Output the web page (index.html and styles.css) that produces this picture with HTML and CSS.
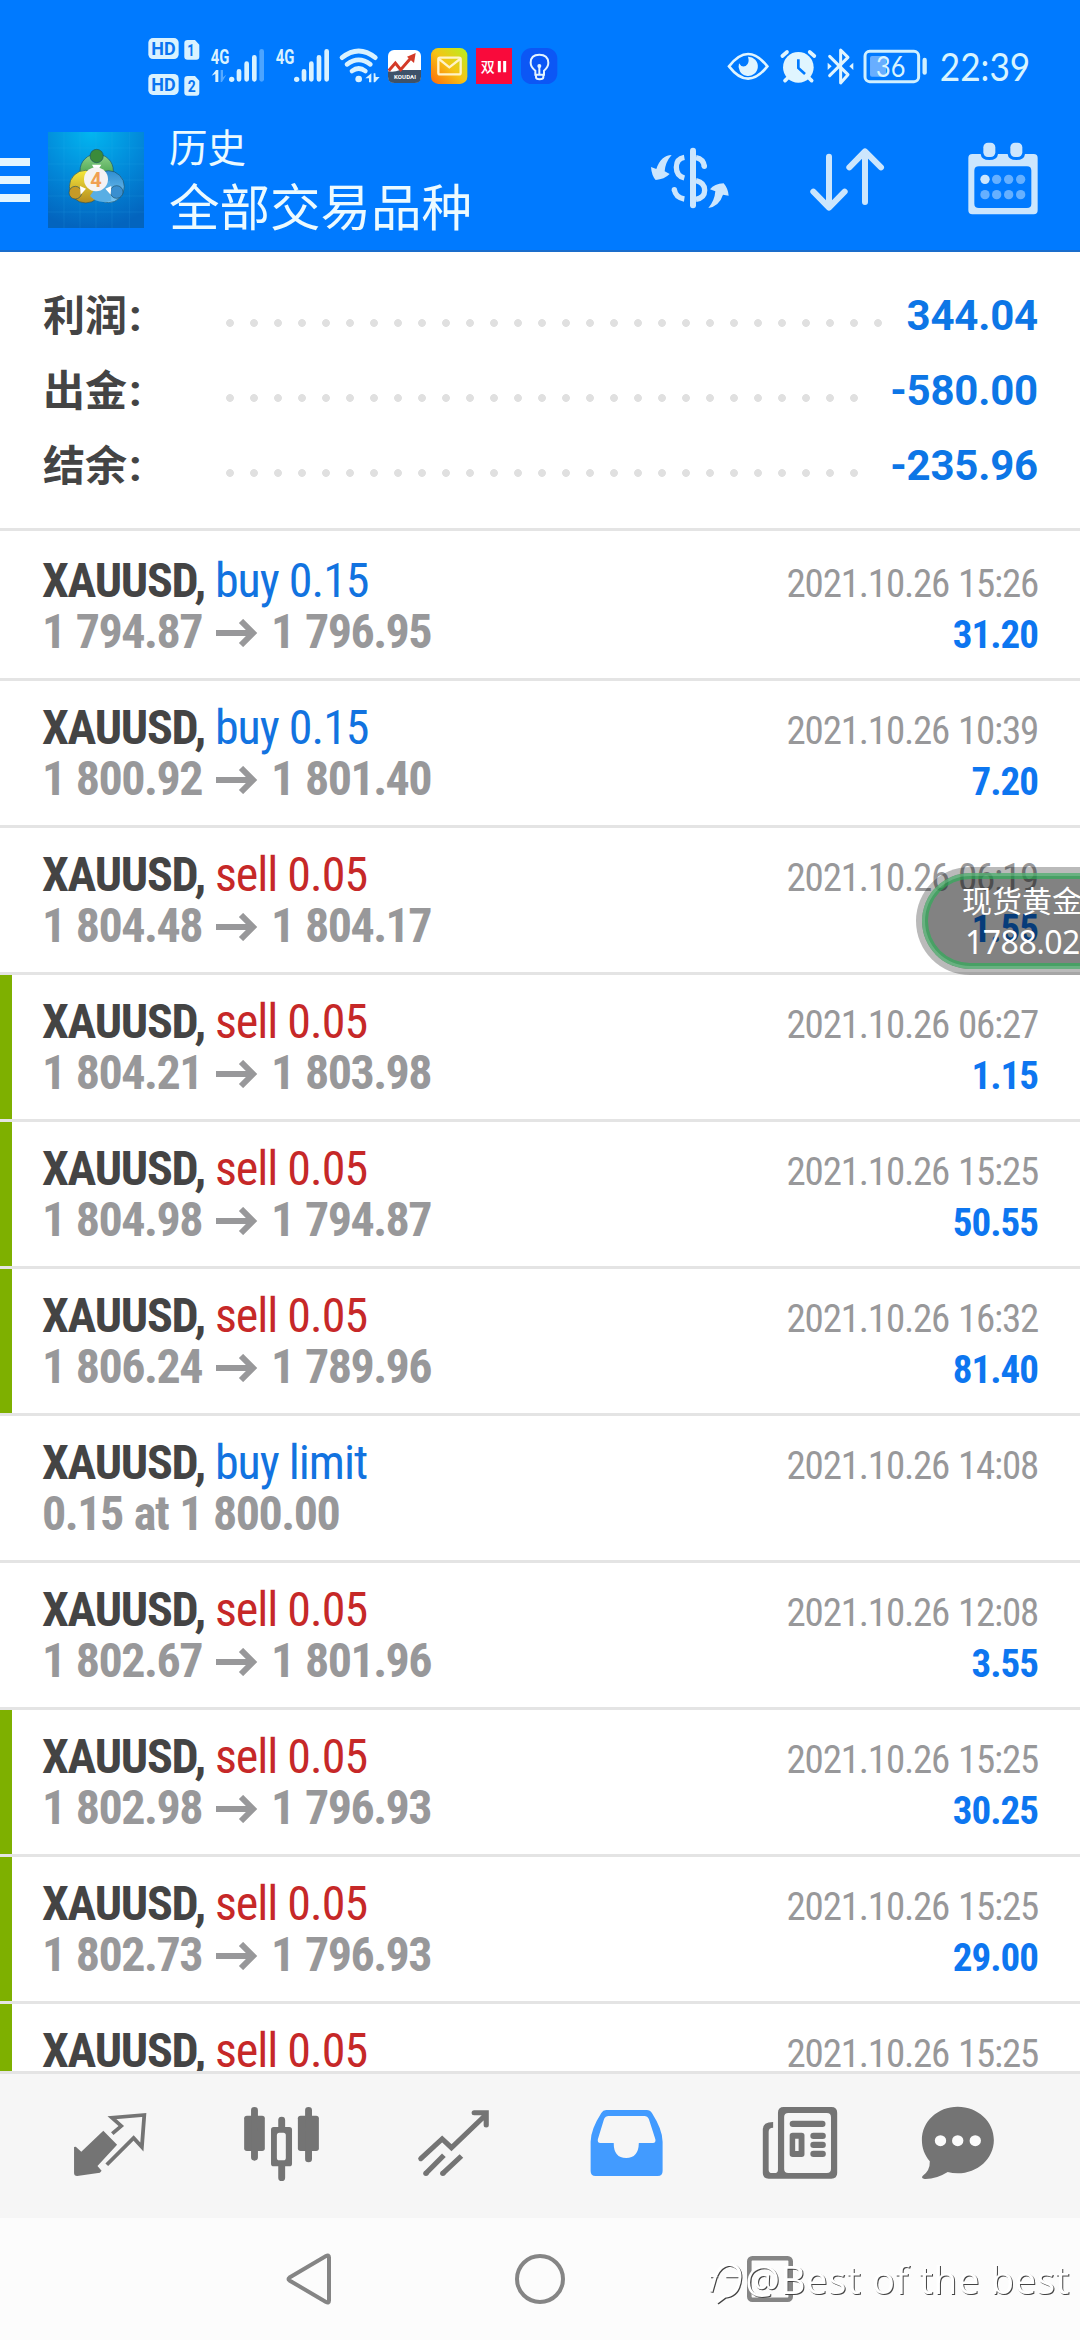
FILE: index.html
```html
<!DOCTYPE html>
<html lang="zh-CN">
<head>
<meta charset="utf-8">
<title>历史</title>
<link rel="stylesheet" href="styles.css">
</head>
<body>
<header class="top">
  <div class="status">
    <div class="status-group">
      <svg viewBox="50 45 172 192" width="57.3" height="64"><g fill="#d9f2ff"><rect x="54" y="54" width="91" height="63" rx="14"/><rect x="54" y="162" width="91" height="63" rx="14"/><path d="M172 60h22l13 14v36q0 9-9 9h-26q-10 0-10-9V70q0-10 10-10zM172 168h22l13 14v36q0 9-9 9h-26q-10 0-10-9v-40q0-10 10-10z"/></g><g class="st-bold" fill="#0a74f0"><text x="63" y="105" font-size="54" textLength="73" lengthAdjust="spacingAndGlyphs">HD</text><text x="63" y="213" font-size="54" textLength="73" lengthAdjust="spacingAndGlyphs">HD</text><text x="171" y="108" font-size="48" textLength="22" lengthAdjust="spacingAndGlyphs">1</text><text x="172" y="216" font-size="48" textLength="24" lengthAdjust="spacingAndGlyphs">2</text></g></svg>
      <svg viewBox="222 45 198 192" width="66" height="64"><g fill="#d9f2ff"><text class="st-bold" x="242" y="132" font-size="60" textLength="56" lengthAdjust="spacingAndGlyphs">4G</text><path d="M245 167l13-17h7v36h-9v-24z"/><circle cx="305" cy="178" r="8"/></g><g stroke="#d9f2ff" stroke-width="14" stroke-linecap="round"><path d="M327 178v-24M350 178v-47M373 178v-66"/><path opacity=".35" d="M395 178V94"/></g><path opacity=".4" fill="#d9f2ff" d="M272 150h7v22l10-8-13 22h-4z"/></svg>
      <svg viewBox="420 45 192 192" width="64" height="64"><g fill="#d9f2ff"><text class="st-bold" x="437" y="132" font-size="60" textLength="56" lengthAdjust="spacingAndGlyphs">4G</text><circle cx="500" cy="178" r="8"/></g><path stroke="#d9f2ff" stroke-width="14" stroke-linecap="round" d="M522 178v-24M544 178v-47M567 178v-66M590 178V94"/></svg>
      <svg viewBox="612 45 150 192" width="50" height="64"><g fill="none" stroke="#d9f2ff" stroke-width="14" stroke-linecap="round"><path d="M636 113Q686 73 736 113M651 133q35-27 70 0M666 153q20-15 40 0"/></g><circle cx="686" cy="177" r="10" fill="#d9f2ff"/><path fill="#d9f2ff" d="M724 160v27h-7v-12h-11zM731 160h5l1 11h12l-14 16h-4z"/></svg>
      <svg viewBox="762 45 126 192" width="42" height="64"><rect x="774" y="90" width="99" height="99" rx="18" fill="#fff"/><path fill="#3e5269" d="M774 154q18 4 36-4h63v20q0 19-19 19h-60q-20 0-20-19z"/><path fill="none" stroke="#d33a28" stroke-width="9" d="M776 152l20-23 16 20 30-34"/><path fill="#d33a28" d="M857 99l-5 30-21-19z"/><text x="792" y="176" font-size="18" class="st-bold" fill="#fff" textLength="66">KOUDAI</text></svg>
      <svg viewBox="888 45 138 192" width="46" height="64"><defs><linearGradient id="mail" x1="0" y1="1" x2="1" y2="0"><stop offset="0" stop-color="#ff6a0a"/><stop offset=".5" stop-color="#f5c415"/><stop offset="1" stop-color="#b6f021"/></linearGradient></defs><rect x="903" y="84" width="109" height="108" rx="22" fill="url(#mail)"/><rect x="925" y="113" width="67" height="50" rx="5" fill="none" stroke="#fff3c8" stroke-width="7"/><path d="M927 117l31 25 32-25" fill="none" stroke="#fff3c8" stroke-width="7"/></svg>
      <svg viewBox="1026 45 132 192" width="44" height="64"><rect x="1038" y="84" width="108" height="108" fill="#f90a3b"/><text class="st-cjk" x="1052" y="155" font-size="42" fill="#fff">双</text><path stroke="#fff" stroke-width="9" d="M1108 123v34M1124 123v34"/></svg>
      <svg viewBox="1158 45 132 192" width="44" height="64"><rect x="1173" y="84" width="109" height="108" rx="32" fill="#0c57f5"/><g fill="none" stroke="#e4f4ff" stroke-width="6"><path d="M1216 164v-12q-14-11-14-24 0-24 26-24t27 24q0 13-13 24v12zM1218 164v8q0 6 11 6t11-6v-8M1228 140v22"/></g><circle cx="1228" cy="138" r="6" fill="#e4f4ff"/></svg>
    </div>
    <div class="status-group">
      <svg viewBox="70 45 152 130" width="50.7" height="43.3"><path d="M85 109Q142 35 200 109 142 183 85 109z" fill="none" stroke="#e0f5ff" stroke-width="8"/><path d="M142 80a29 29 0 1 1-27 20q7 13 20 8 13-8 7-28z" fill="#e0f5ff"/></svg>
      <svg viewBox="222 45 140 130" width="46.7" height="43.3"><circle cx="292" cy="112" r="46" fill="#e0f5ff"/><path d="M292 88v26l20 18" fill="none" stroke="#007aff" stroke-width="8"/><path d="M244 78l14-12M340 78l-14-12M252 152l8-8M332 152l-8-8" stroke="#e0f5ff" stroke-width="11" stroke-linecap="round"/></svg>
      <svg viewBox="362 45 112 130" width="37.3" height="43.3"><path d="M385 79l55 55-22 25V60l22 22-55 55" fill="none" stroke="#e0f5ff" stroke-width="9" stroke-linejoin="round" stroke-linecap="round"/><path d="M379 98l12 11-12 11zM456 98l-12 11 12 11z" fill="#e0f5ff"/></svg>
      <svg viewBox="474 45 216 130" width="72" height="43.3"><rect x="492" y="64" width="161" height="91" rx="14" fill="none" stroke="#d0f0ff" stroke-width="9"/><rect x="507" y="78" width="48" height="62" rx="6" fill="#68aeff"/><path d="M671 90v38" stroke="#d0f0ff" stroke-width="13" stroke-linecap="round"/><text class="st-light" x="525" y="140" font-size="84" fill="#d8f4ff" textLength="88" lengthAdjust="spacingAndGlyphs">36</text></svg>
      <svg class="clock" viewBox="690 45 300 130" width="100" height="43.3"><text class="st-light" x="716" y="154" font-size="115" fill="#d8f4ff" textLength="272" lengthAdjust="spacingAndGlyphs">22:39</text></svg>
    </div>
  </div>
  <div class="appbar">
    <div class="menu"><i></i><i></i><i></i></div>
    <svg class="logo" viewBox="144 66 288 288" width="96" height="96">
      <defs>
        <radialGradient id="sky" cx=".45" cy="0" r="1"><stop offset="0" stop-color="#02b6f0"/><stop offset=".55" stop-color="#0287d8"/><stop offset="1" stop-color="#0364be"/></radialGradient>
        <linearGradient id="gr" x2="0" y2="1"><stop offset="0" stop-color="#8fd28b"/><stop offset="1" stop-color="#238a2c"/></linearGradient>
        <linearGradient id="ye" x2="0" y2="1"><stop offset="0" stop-color="#f5e83c"/><stop offset="1" stop-color="#b58b1e"/></linearGradient>
        <linearGradient id="bl" x2="0" y2="1"><stop offset="0" stop-color="#2f8ed2"/><stop offset="1" stop-color="#7cc6f2"/></linearGradient>
      </defs>
      <path fill="url(#sky)" d="M144 66h288v288H144z"/>
      <path stroke="#3bb4ee" stroke-opacity=".22" stroke-width="2" d="M192 66v288M240 66v288M288 66v288M336 66v288M388 66v288M144 114h288M144 162h288M144 210h288M144 258h288M144 306h288"/>
      <g stroke="#1b4d63" stroke-opacity=".6" stroke-width="3">
        <circle cx="290" cy="182" r="50" fill="url(#gr)"/>
        <circle cx="325" cy="230" r="48" fill="url(#bl)"/>
        <circle cx="257" cy="230" r="49" fill="url(#ye)"/>
        <path d="M288 232l42-20 4 60q-40 12-64-14z" fill="#58aee4" stroke="none"/>
        <circle cx="290" cy="138" r="20" fill="#3b8b3a"/>
        <circle cx="226" cy="248" r="19" fill="#c69a26"/>
        <circle cx="350" cy="246" r="19" fill="#3a8fd0"/>
      </g>
      <path fill="#fff" d="M276 164h28l-10 16h-9zM240 228l18 8-16 18zM334 228l-18 8 16 18z"/>
      <circle cx="288" cy="208" r="36" fill="#f5f3f4"/>
      <text class="st-bold" x="271" y="230" font-size="60" fill="#f0a052">4</text>
    </svg>
    <div class="titles"><div class="title-small">历史</div><div class="title-big">全部交易品种</div></div>
    <div class="actions">
      <svg viewBox="84 54 252 252" width="84" height="84"><path d="M219 92v164" stroke="#cce6fd" stroke-width="18" stroke-linecap="round"/><g fill="none" stroke="#cce6fd" stroke-width="16"><path d="M193 112q-24 4-24 30t24 32M163 209q4 24 30 28"/><path d="M228 113q22 4 25 26M228 182q26 6 26 29t-26 27"/></g><circle cx="253" cy="139" r="8" fill="#cce6fd"/><circle cx="163" cy="209" r="8" fill="#cce6fd"/><path fill="#cce6fd" d="M155 105q-33 2-46 42l-16-6q2 26 14 39 26-2 42-18l-15-8q2-28 21-49zM265 264q33-6 44-40l17 3q-2-22-15-37-28 1-41 18l16 6q-2 28-21 50z"/></svg>
      <svg viewBox="552 54 252 252" width="84" height="84"><path d="M624 110v150M577 215l47 48 47-48M732 246V96M685 142l47-48 48 48" fill="none" stroke="#cce6fd" stroke-width="18" stroke-linecap="round" stroke-linejoin="round"/></svg>
      <svg viewBox="1022 54 252 252" width="84" height="84"><path fill="#cce6fd" fill-rule="evenodd" d="M1056 102h25q2 18 26 18t26-18h29q2 18 26 18t26-18h26q12 0 12 12v156q0 13-12 13h-184q-12 0-12-13V114q0-12 12-12zm20 37q-14 0-14 13v99q0 13 14 13h144q13 0 13-13v-99q0-13-13-13z"/><rect x="1089" y="68" width="36" height="43" rx="14" fill="#cce6fd"/><rect x="1170" y="68" width="36" height="43" rx="14" fill="#cce6fd"/><g fill="#66b0ff"><circle cx="1094" cy="178" r="14" fill="#cce6fd"/><circle cx="1129" cy="178" r="14"/><circle cx="1165" cy="178" r="14"/><circle cx="1201" cy="178" r="14"/><circle cx="1094" cy="224" r="14"/><circle cx="1129" cy="224" r="14"/><circle cx="1165" cy="224" r="14"/><circle cx="1201" cy="224" r="14"/></g></svg>
    </div>
  </div>
</header>

<section class="summary">
  <div class="sum-row"><span class="sum-label">利润<span class="colon">:</span></span><span class="dots dots-long"></span><span class="sum-value">344.04</span></div>
  <div class="sum-row"><span class="sum-label">出金<span class="colon">:</span></span><span class="dots"></span><span class="sum-value">-580.00</span></div>
  <div class="sum-row"><span class="sum-label">结余<span class="colon">:</span></span><span class="dots"></span><span class="sum-value">-235.96</span></div>
</section>

<main class="list">
  <article class="deal"><div class="line"><span><b class="sym">XAUUSD, </b><span class="buy">buy 0.15</span></span><time>2021.10.26 15:26</time></div><div class="line"><span class="price">1 794.87<svg class="arrow" viewBox="0 0 42 28"><path d="M0 14h37M25 2l12 12-12 12"/></svg>1 796.95</span><span class="profit">31.20</span></div></article>
  <article class="deal"><div class="line"><span><b class="sym">XAUUSD, </b><span class="buy">buy 0.15</span></span><time>2021.10.26 10:39</time></div><div class="line"><span class="price">1 800.92<svg class="arrow" viewBox="0 0 42 28"><path d="M0 14h37M25 2l12 12-12 12"/></svg>1 801.40</span><span class="profit">7.20</span></div></article>
  <article class="deal"><div class="line"><span><b class="sym">XAUUSD, </b><span class="sell">sell 0.05</span></span><time>2021.10.26 06:19</time></div><div class="line"><span class="price">1 804.48<svg class="arrow" viewBox="0 0 42 28"><path d="M0 14h37M25 2l12 12-12 12"/></svg>1 804.17</span><span class="profit">1.55</span></div></article>
  <article class="deal tp"><div class="line"><span><b class="sym">XAUUSD, </b><span class="sell">sell 0.05</span></span><time>2021.10.26 06:27</time></div><div class="line"><span class="price">1 804.21<svg class="arrow" viewBox="0 0 42 28"><path d="M0 14h37M25 2l12 12-12 12"/></svg>1 803.98</span><span class="profit">1.15</span></div></article>
  <article class="deal tp"><div class="line"><span><b class="sym">XAUUSD, </b><span class="sell">sell 0.05</span></span><time>2021.10.26 15:25</time></div><div class="line"><span class="price">1 804.98<svg class="arrow" viewBox="0 0 42 28"><path d="M0 14h37M25 2l12 12-12 12"/></svg>1 794.87</span><span class="profit">50.55</span></div></article>
  <article class="deal tp"><div class="line"><span><b class="sym">XAUUSD, </b><span class="sell">sell 0.05</span></span><time>2021.10.26 16:32</time></div><div class="line"><span class="price">1 806.24<svg class="arrow" viewBox="0 0 42 28"><path d="M0 14h37M25 2l12 12-12 12"/></svg>1 789.96</span><span class="profit">81.40</span></div></article>
  <article class="deal"><div class="line"><span><b class="sym">XAUUSD, </b><span class="buy">buy limit</span></span><time>2021.10.26 14:08</time></div><div class="line"><span class="price">0.15 at 1 800.00</span></div></article>
  <article class="deal"><div class="line"><span><b class="sym">XAUUSD, </b><span class="sell">sell 0.05</span></span><time>2021.10.26 12:08</time></div><div class="line"><span class="price">1 802.67<svg class="arrow" viewBox="0 0 42 28"><path d="M0 14h37M25 2l12 12-12 12"/></svg>1 801.96</span><span class="profit">3.55</span></div></article>
  <article class="deal tp"><div class="line"><span><b class="sym">XAUUSD, </b><span class="sell">sell 0.05</span></span><time>2021.10.26 15:25</time></div><div class="line"><span class="price">1 802.98<svg class="arrow" viewBox="0 0 42 28"><path d="M0 14h37M25 2l12 12-12 12"/></svg>1 796.93</span><span class="profit">30.25</span></div></article>
  <article class="deal tp"><div class="line"><span><b class="sym">XAUUSD, </b><span class="sell">sell 0.05</span></span><time>2021.10.26 15:25</time></div><div class="line"><span class="price">1 802.73<svg class="arrow" viewBox="0 0 42 28"><path d="M0 14h37M25 2l12 12-12 12"/></svg>1 796.93</span><span class="profit">29.00</span></div></article>
  <article class="deal tp"><div class="line"><span><b class="sym">XAUUSD, </b><span class="sell">sell 0.05</span></span><time>2021.10.26 15:25</time></div></article>
</main>

<nav class="tabs">
  <svg viewBox="180 144 278.8 288" preserveAspectRatio="none"><path fill="#747474" d="M300 242L340 284 283 348l12 14-5 6-66 10q-9 0-9-9v-78l5-1 16 15z"/><path fill="none" stroke="#747474" stroke-width="11" d="M326 251l26-23-27-25 94-8-7 96-24-27-78 80"/></svg>
  <svg viewBox="679.5 144 278.8 288" preserveAspectRatio="none"><g fill="#747474"><rect x="709" y="197" width="60" height="106" rx="8"/><rect x="865" y="197" width="61" height="106" rx="8"/><path fill-rule="evenodd" d="M795 231h45q8 0 8 8v102q0 8-8 8h-45q-8 0-8-8V239q0-8 8-8zm16 17q-7 0-7 8v67q0 8 7 8h12q7 0 7-8v-67q0-8-7-8z"/></g><path stroke="#747474" stroke-width="20" stroke-linecap="round" d="M739 181v141M896 181v146M818 210v25M818 345v38"/></svg>
  <svg viewBox="1179 144 278.8 288" preserveAspectRatio="none"><g fill="none" stroke="#747474" stroke-width="15"><path stroke-linecap="round" d="M1222 326l62-59 27 26 97-96M1377 188h35v37"/><path d="M1237 370l52-54M1286 370l54-52"/></g><circle cx="1237" cy="370" r="8" fill="#747474"/><circle cx="1286" cy="370" r="8" fill="#747474"/></svg>
  <svg viewBox="110.3 144 278.8 288" preserveAspectRatio="none"><path fill="#429bff" fill-rule="evenodd" d="M192 180h118q10 0 15 9 31 50 31 86v88q0 15-14 15H161q-14 0-14-15v-88q0-36 31-86 5-9 14-9zm7 18q-9 0-13 9l-18 61q-2 11 7 11h39q0 45 36 45t37-45h41q9 0 7-11l-19-61q-4-9-13-9z"/></svg>
  <svg viewBox="609.8 144 278.8 288" preserveAspectRatio="none"><path fill="#747474" fill-rule="evenodd" d="M708 171h138q17 0 17 17v181q0 17-17 17H664q-17 0-17-17V238q0-22 30-22v17q-13 0-13 12v114q0 10 10 10h7q10 0 10-10V188q0-17 17-17zm13 18q-12 0-12 12v156q0 12 12 12h112q12 0 12-12V201q0-12-12-12z"/><g fill="#747474"><rect x="725" y="212" width="104" height="19" rx="9"/><path fill-rule="evenodd" d="M734 248h26q8 0 8 8v57q0 8-8 8h-26q-9 0-9-8v-57q0-8 9-8zm7 18v37h10v-37z"/><rect x="785" y="248" width="45" height="19" rx="9"/><rect x="785" y="275" width="45" height="19" rx="9"/><rect x="785" y="302" width="45" height="19" rx="9"/></g></svg>
  <svg viewBox="1109.3 144 278.8 288" preserveAspectRatio="none"><path fill="#747474" d="M1213 170c58 0 105 44 105 100s-47 100-105 100q-16 0-29-4-34 22-67 21-11-2-6-9 22-16 21-44c-15-19-23-39-23-64 0-56 46-100 104-100z"/><g fill="#fbfbfb"><circle cx="1163" cy="272" r="16.500"/><circle cx="1213" cy="272" r="16.500"/><circle cx="1264" cy="272" r="16.500"/></g></svg>
</nav>

<footer class="sysnav">
  <svg width="50" height="54" viewBox="0 0 50 54"><path d="M4.500 25.500 41 4q3-1.500 3 1.500v43q0 3-3 1.500L4.500 28.500q-2-1.500 0-3z" fill="none" stroke="#858585" stroke-width="4"/></svg>
  <svg width="50" height="50" viewBox="0 0 50 50"><circle cx="25" cy="25" r="23" fill="none" stroke="#858585" stroke-width="4"/></svg>
  <svg width="46" height="46" viewBox="0 0 46 46"><rect x="2.300" y="2.300" width="41.400" height="41.400" rx="3" fill="none" stroke="#858585" stroke-width="4.600"/></svg>
  <svg class="watermark" viewBox="0 80 1140 210" width="380" height="70"><g fill="none" stroke="#fff" stroke-width="9"><path d="M30 169h22M33 217l13-46q14-32 40-36 34 2 34 38-4 54-46 58l-24 18M76 169h42"/></g><text x="136" y="223" font-size="116" textLength="972" lengthAdjust="spacing">@Best of the best</text></svg>
</footer>

<aside class="quote-dock"><div class="quote"><span class="quote-name">现货黄金</span><span class="quote-price">1788.02</span></div></aside>
</body>
</html>
```
FILE: styles.css
```css
* { box-sizing: border-box; }
body {
  margin: 0;
  width: 1080px;
  height: 2340px;
  display: flex;
  flex-direction: column;
  position: relative;
  overflow: hidden;
  background: #fff;
  font-family: Roboto, "Noto Sans CJK SC", sans-serif;
  color: #444;
}
svg { display: block; flex: none; }

.top { height: 252px; flex: none; background: #007aff; border-bottom: 2px solid #1a6dcc; }
.status { height: 110px; padding: 24px 49px 0 147px; display: flex; justify-content: space-between; align-items: center; }
.status-group { display: flex; align-items: center; }
.clock { overflow: visible; }
.st-bold { font-family: Roboto, sans-serif; font-weight: 700; }
.st-light { font-family: Lato, sans-serif; }
.st-cjk { font-family: "Noto Sans CJK SC", sans-serif; font-weight: 500; }

.appbar { height: 140px; display: flex; align-items: center; padding-right: 35px; }
.menu { width: 30px; display: grid; gap: 10px; }
.menu i { height: 8px; background: #e4f6ff; }
.logo { margin-left: 18px; }
.titles { margin-left: 25px; color: #ecfaff; font-family: "Noto Sans CJK SC", sans-serif; white-space: nowrap; }
.title-small { font-size: 38.500px; line-height: 48px; }
.title-big { font-size: 50.500px; line-height: 70px; }
.actions { margin-left: auto; display: flex; gap: 72.500px; }

.summary { height: 279px; flex: none; padding: 26px 42px 0 43px; border-bottom: 3px solid #e4e4e4; }
.sum-row { height: 75px; display: flex; align-items: center; font-weight: 700; font-size: 42px; line-height: 50px; }
.sum-label { width: 175px; height: 50px; margin-top: 2px; }
.colon { margin-left: 2px; font-size: 45px; line-height: 40px; }
.dots { width: 648px; height: 24px; margin-top: 14px; background: radial-gradient(circle, #e0e0e0 3.500px, transparent 4.300px) 0 0 / 24px 24px repeat-x; }
.dots-long { width: 672px; }
.sum-value { margin-left: auto; height: 50px; letter-spacing: -.2px; color: #0d76e6; }

.list { flex: 1; min-height: 0; overflow: hidden; font-family: Roboto, sans-serif; font-stretch: 75%; padding-top: 3px; }
.deal { height: 147px; padding: 21px 42px 0; border-bottom: 3px solid #e4e4e4; position: relative; }
.tp::before { content: ""; position: absolute; left: 0; top: 0; bottom: 0; width: 12px; background: #7eb000; }
.line { height: 51px; display: flex; justify-content: space-between; align-items: baseline; font-size: 48px; line-height: 51px; white-space: nowrap; }
.sym { color: #444; letter-spacing: -1.250px; }
.buy { color: #1273e0; letter-spacing: -1px; }
.sell { color: #c62828; letter-spacing: -1px; }
.price { font-weight: 700; color: #98989a; letter-spacing: -1.500px; word-spacing: 1.500px; }
.arrow { display: inline-block; width: 42px; height: 28px; margin: 0 13px 0 14px; vertical-align: 1px; fill: none; stroke: #98989a; stroke-width: 6; }
time { font-size: 39px; color: #98989a; letter-spacing: -1.200px; word-spacing: 1px; }
.profit { font-size: 39px; font-weight: 700; color: #0d76f0; letter-spacing: -1px; }

.tabs { height: 147px; flex: none; display: grid; grid-template-columns: repeat(6, 172px); padding-left: 24px; place-items: center; background: #f6f6f6; border-top: 3px solid #e4e4e4; }
.tabs svg { width: 96px; height: 96px; overflow: visible; }

.sysnav { height: 122px; flex: none; display: grid; grid-template-columns: repeat(3, 230px); justify-content: center; place-items: center; background: #fcfcfc; position: relative; }
.watermark { position: absolute; left: 700px; top: 28px; fill: #fff; font-family: "Open Sans", "Noto Sans", sans-serif; font-weight: 400; filter: drop-shadow(1px 1px 0 #444); }

.quote-dock { position: absolute; right: 0; top: 867px; width: 164px; height: 108px; overflow: hidden; }
.quote { width: 228px; height: 108px; padding: 8px 0 0 40px; border: 6px solid rgba(0, 0, 0, .27); background: rgba(0, 0, 0, .49) padding-box; border-radius: 54px; box-shadow: inset 0 0 0 3px rgba(255, 255, 255, .18), inset 0 0 0 6px rgba(40, 175, 85, .65); color: #fff; display: flex; flex-direction: column; white-space: nowrap; }
.quote-name { font: 30px/37px "Noto Sans CJK SC", sans-serif; }
.quote-price { margin-left: 3px; font: 32px/48px "Noto Sans", sans-serif; letter-spacing: -.500px; }
```
